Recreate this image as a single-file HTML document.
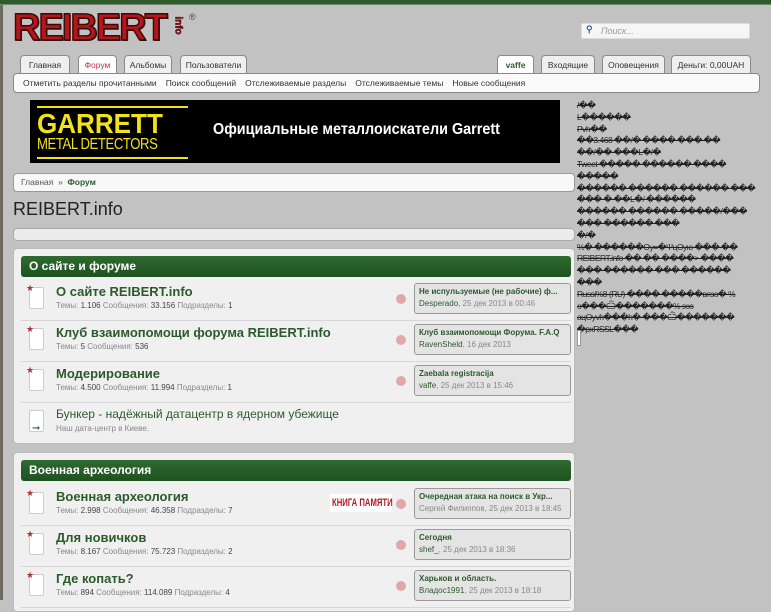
<!DOCTYPE html>
<html><head><meta charset="utf-8"><style>
*{margin:0;padding:0;box-sizing:border-box}
body{width:771px;height:600px;overflow:hidden;background:#c2c2c2;font-family:"Liberation Sans","DejaVu Sans",sans-serif;position:relative;color:#333}
.a{position:absolute}
.topbar{left:0;top:0;width:771px;height:5px;background:#2f5a2e;border-bottom:1px solid #6d8a6b}
.leftedge{left:0;top:0;width:3px;height:600px;background:#6e6a60}
.logo{left:13px;top:7px;font:bold 38px "Liberation Sans",sans-serif;color:#b5161b;letter-spacing:-2px;-webkit-text-stroke:1.5px #3a0a0a;text-shadow:1px 1px 0 #222}
.info{left:169px;top:20px;font:bold 10px "Liberation Sans",sans-serif;color:#9c1a1a;transform:rotate(90deg);-webkit-text-stroke:.5px #300}
.reg{left:189px;top:12px;font:9px "Liberation Sans",sans-serif;color:#444}
.search{left:581px;top:23px;width:169px;height:16px;background:#f6f6f6;border:1px solid #ddd;border-radius:2px;font:italic 9px "Liberation Sans",sans-serif;color:#999;padding:2px 0 0 19px}
.tab{top:55px;height:19px;background:#efefef;border:1px solid #8a8a8a;border-bottom:none;border-radius:4px 4px 0 0;font-size:8.5px;color:#333;text-align:center;line-height:18px;white-space:nowrap}
.tab.act{background:#fff;color:#c0394a;height:20px}
.subnav{left:13px;top:73px;width:747px;height:20px;background:#fafafa;border:1px solid #888;border-radius:4px;font-size:8.5px;color:#333;line-height:18px;white-space:nowrap}
.subnav span{margin-left:9px}
.banner{left:30px;top:100px;width:530px;height:63px;background:#000}
.crumb{left:13px;top:173px;width:562px;height:19px;background:#f8f8f8;border:1px solid #999;border-radius:4px;font-size:8.5px;line-height:17px;padding-left:7px;color:#555}
.title{left:13px;top:199px;font:18px "Liberation Sans",sans-serif;color:#222}
.empty{left:13px;top:228px;width:562px;height:13px;background:#ececec;border:1px solid #aaa;border-radius:4px}
.cat{left:13px;width:562px;background:#f0f0f0;border:1px solid #bbb;border-radius:4px}
.hdr{left:7px;top:7px;width:550px;height:21px;background:linear-gradient(#2e6b30,#1f5121);border-radius:3px;color:#fff;font:bold 12px "Liberation Sans",sans-serif;line-height:21px;padding-left:8px}
.row{left:7px;width:550px;height:41px;border-bottom:1px solid #d6d6d6}
.ico{left:8px;top:7px;width:15px;height:22px;background:#fff;border:1px solid #ccc;border-radius:2px}
.star{left:5px;top:3px;color:#b03030;font-size:9px}
.name{left:35px;top:4px;font:bold 13px "Liberation Sans",sans-serif;color:#2d5a2d}
.stat{left:35px;top:21px;font-size:8px;color:#888}
.stat b{font-weight:normal;color:#444}
.rss{left:375px;top:14px;width:10px;height:10px;border-radius:50%;background:#e0a8a8}
.last{left:393px;top:3px;width:157px;height:31px;background:#e4e4e4;border:1px solid #999;border-radius:3px;padding:2px 4px;font-size:8px;line-height:12px;white-space:nowrap;overflow:hidden}
.last b{color:#2d5a2d;display:block}
.last span{color:#2d5a2d}
.last i{font-style:normal;color:#888}
.side{left:577px;top:100px;width:194px;font:8.5px "Liberation Sans","DejaVu Sans",sans-serif;color:#222;line-height:11.8px;text-decoration:line-through;white-space:nowrap;overflow:hidden;letter-spacing:-0.5px}
</style></head><body>
<div class="a leftedge"></div>
<div class="a topbar"></div>
<div class="a logo">REIBERT</div>
<div class="a info">info</div>
<div class="a reg">®</div>
<div class="a search"><span style="position:absolute;left:4px;top:0px;color:#3a5a9a;font-style:normal;font-weight:bold">&#9906;</span>Поиск...</div>

<div class="a tab" style="left:20px;width:50px">Главная</div>
<div class="a tab act" style="left:78px;width:39px">Форум</div>
<div class="a tab" style="left:124px;width:48px">Альбомы</div>
<div class="a tab" style="left:180px;width:67px">Пользователи</div>
<div class="a tab" style="left:497px;width:37px;background:#fff;font-weight:bold;color:#2d5a2d">vaffe</div>
<div class="a tab" style="left:541px;width:54px">Входящие</div>
<div class="a tab" style="left:602px;width:63px">Оповещения</div>
<div class="a tab" style="left:671px;width:80px">Деньги: 0,00UAH</div>
<div class="a subnav"><span>Отметить разделы прочитанными</span><span>Поиск сообщений</span><span>Отслеживаемые разделы</span><span>Отслеживаемые темы</span><span>Новые сообщения</span></div>

<div class="a banner">
 <div class="a" style="left:7px;top:6px;width:151px;height:2px;background:#f2e21a"></div>
 <div class="a" style="left:7px;top:8px;font:bold 28px 'Liberation Sans',sans-serif;color:#f2e21a;transform:scaleX(.93);transform-origin:left">GARRETT</div>
 <div class="a" style="left:7px;top:36px;font:16px 'Liberation Sans',sans-serif;color:#f2e21a;letter-spacing:-0.5px;transform:scaleX(.82);transform-origin:left">METAL DETECTORS</div>
 <div class="a" style="left:7px;top:57px;width:151px;height:2px;background:#f2e21a"></div>
 <div class="a" style="left:183px;top:21px;font:bold 16px 'Liberation Sans',sans-serif;color:#fff;transform:scaleX(.9);transform-origin:left">Официальные металлоискатели Garrett</div>
</div>

<div class="a crumb">Главная &nbsp;»&nbsp; <b style="color:#2d5a2d">Форум</b></div>
<div class="a title">REIBERT.info</div>
<div class="a empty"></div>

<div class="a cat" style="top:248px;height:196px">
 <div class="a hdr">О сайте и форуме</div>
 <div class="a row" style="top:31px"><div class="a ico"></div><div class="a star">★</div><div class="a name">О сайте REIBERT.info</div><div class="a stat">Темы: <b>1.106</b> Сообщения: <b>33.156</b> Подразделы: <b>1</b></div><div class="a rss"></div><div class="a last"><b>Не испульзуемые (не рабочие) ф...</b><span>Desperado</span><i>, 25 дек 2013 в 00:46</i></div></div>
 <div class="a row" style="top:72px"><div class="a ico"></div><div class="a star">★</div><div class="a name">Клуб взаимопомощи форума REIBERT.info</div><div class="a stat">Темы: <b>5</b> Сообщения: <b>536</b></div><div class="a rss"></div><div class="a last"><b>Клуб взаимопомощи Форума. F.A.Q</b><span>RavenSheld</span><i>, 16 дек 2013</i></div></div>
 <div class="a row" style="top:113px"><div class="a ico"></div><div class="a star">★</div><div class="a name">Модерирование</div><div class="a stat">Темы: <b>4.500</b> Сообщения: <b>11.994</b> Подразделы: <b>1</b></div><div class="a rss"></div><div class="a last"><b>Zaebala registracija</b><span>vaffe</span><i>, 25 дек 2013 в 15:46</i></div></div>
 <div class="a row" style="top:154px;border:none"><div class="a ico"></div><div class="a" style="left:11px;top:20px;color:#2d6a3d;font-size:10px">➞</div><div class="a name" style="font-weight:normal;font-size:12px">Бункер - надёжный датацентр в ядерном убежище</div><div class="a stat">Наш дата-центр в Киеве.</div></div>
</div>

<div class="a cat" style="top:452px;height:160px">
 <div class="a hdr">Военная археология</div>
 <div class="a row" style="top:32px"><div class="a ico"></div><div class="a star">★</div><div class="a name">Военная археология</div><div class="a stat">Темы: <b>2.998</b> Сообщения: <b>46.358</b> Подразделы: <b>7</b></div><div class="a" style="left:309px;top:9px;background:#fff;width:62px;height:18px"></div><div class="a" style="left:311px;top:12px;font:bold 11px 'Liberation Sans',sans-serif;color:#b01c24;white-space:nowrap;transform:scaleX(.7);transform-origin:left">КНИГА ПАМЯТИ</div><div class="a rss"></div><div class="a last"><b>Очередная атака на поиск в Укр...</b><i>Сергей Филиппов, 25 дек 2013 в 18:45</i></div></div>
 <div class="a row" style="top:73px"><div class="a ico"></div><div class="a star">★</div><div class="a name">Для новичков</div><div class="a stat">Темы: <b>8.167</b> Сообщения: <b>75.723</b> Подразделы: <b>2</b></div><div class="a rss"></div><div class="a last"><b>Сегодня</b><span>shef_</span><i>, 25 дек 2013 в 18:36</i></div></div>
 <div class="a row" style="top:114px"><div class="a ico"></div><div class="a star">★</div><div class="a name">Где копать?</div><div class="a stat">Темы: <b>894</b> Сообщения: <b>114.089</b> Подразделы: <b>4</b></div><div class="a rss"></div><div class="a last"><b>Харьков и область.</b><span>Владос1991</span><i>, 25 дек 2013 в 18:18</i></div></div>
</div>

<div class="a side">/��<br>L������<br>Pvh��<br>��3.468 ��/� ���� ��� ��<br>��/�� ���L�/�<br>Tweet ����� ������ ����<br>�����<br>������ ������ ������ ���<br>��� � ��L�/ ������<br>������ ������ �����/���<br>��� ������ ���<br>�/�<br>%� ������Oy=�ΨцOyю ��� ��<br>REIBERT.info �� �� ����&gt; ����<br>��� ������ ��� ������<br>���<br>Russi%8 (RU) ���� �����вязо� %<br>о���Ѽ�������% эээ<br>aцOyvh���h� ���Ѽ�������<br>�pxRSSL���</div>
<div class="a" style="left:577px;top:330px;width:4px;height:16px;background:#fff;border:1px solid #999"></div>
</body></html>
